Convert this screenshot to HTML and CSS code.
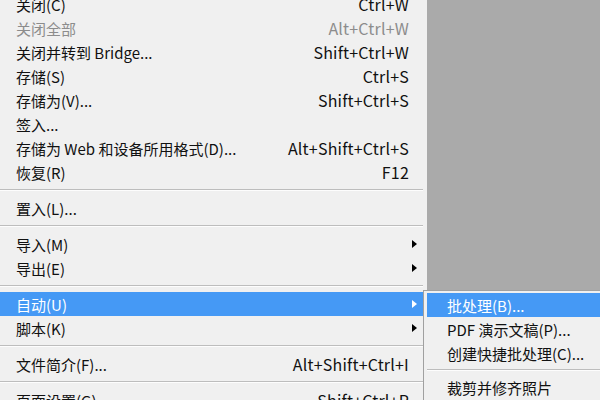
FILE: index.html
```html
<!DOCTYPE html>
<html lang="zh-CN">
<head>
    <meta charset="UTF-8">
    <title>文件菜单</title>
    <link rel="stylesheet" href="styles.css">
</head>
<body>
    <div class="menu">
        <div class="item"><span class="label">关闭(C)</span><span class="key">Ctrl+W</span><span class="sub"></span></div>
        <div class="item disabled"><span class="label">关闭全部</span><span class="key">Alt+Ctrl+W</span><span class="sub"></span></div>
        <div class="item"><span class="label">关闭并转到 Bridge...</span><span class="key">Shift+Ctrl+W</span><span class="sub"></span></div>
        <div class="item"><span class="label">存储(S)</span><span class="key">Ctrl+S</span><span class="sub"></span></div>
        <div class="item"><span class="label">存储为(V)...</span><span class="key">Shift+Ctrl+S</span><span class="sub"></span></div>
        <div class="item"><span class="label">签入...</span><span class="key"></span><span class="sub"></span></div>
        <div class="item"><span class="label">存储为 Web 和设备所用格式(D)...</span><span class="key">Alt+Shift+Ctrl+S</span><span class="sub"></span></div>
        <div class="item"><span class="label">恢复(R)</span><span class="key">F12</span><span class="sub"></span></div>
        <div class="separator"></div>
        <div class="item"><span class="label">置入(L)...</span><span class="key"></span><span class="sub"></span></div>
        <div class="separator"></div>
        <div class="item"><span class="label">导入(M)</span><span class="key"></span><span class="sub"><i class="arrow"></i></span></div>
        <div class="item"><span class="label">导出(E)</span><span class="key"></span><span class="sub"><i class="arrow"></i></span></div>
        <div class="separator"></div>
        <div class="item active"><span class="label">自动(U)</span><span class="key"></span><span class="sub"><i class="arrow"></i></span></div>
        <div class="item"><span class="label">脚本(K)</span><span class="key"></span><span class="sub"><i class="arrow"></i></span></div>
        <div class="separator"></div>
        <div class="item"><span class="label">文件简介(F)...</span><span class="key">Alt+Shift+Ctrl+I</span><span class="sub"></span></div>
        <div class="separator"></div>
        <div class="item"><span class="label">页面设置(G)...</span><span class="key">Shift+Ctrl+P</span><span class="sub"></span></div>

        <div class="submenu">
            <div class="item active"><span class="label">批处理(B)...</span></div>
            <div class="item"><span class="label">PDF 演示文稿(P)...</span></div>
            <div class="item"><span class="label">创建快捷批处理(C)...</span></div>
            <div class="separator"></div>
            <div class="item"><span class="label">裁剪并修齐照片</span></div>
        </div>
    </div>
    <div class="workspace"></div>
</body>
</html>
```

FILE: styles.css
```css
* {
    margin: 0;
    padding: 0;
    box-sizing: border-box;
}

body {
    font-family: 'Noto Sans CJK SC', 'Noto Sans', sans-serif;
    font-size: 15px;
    color: #111;
    width: 600px;
    height: 400px;
    overflow: hidden;
    display: flex;
    background: #aaaaaa;
}

.menu {
    position: relative;
    width: 427px;
    height: 420px;
    margin-top: -8px;
    padding-right: 4px;
    background: #f0f0f0;
    flex-shrink: 0;
}

.item {
    display: flex;
    align-items: center;
    height: 24px;
    padding-left: 16px;
    white-space: nowrap;
}

.item .label {
    flex: 1;
}

.item .key {
    font-size: 16px;
    letter-spacing: 0.2px;
    text-align: right;
}

.item .sub {
    width: 14px;
    height: 24px;
    display: flex;
    align-items: center;
    padding-left: 3px;
}

.arrow {
    width: 0;
    height: 0;
    border-top: 4.5px solid transparent;
    border-bottom: 4.5px solid transparent;
    border-left: 5px solid #000;
}

.item.disabled {
    color: #8c8c8c;
}

.item.active {
    background: #4599f5;
    color: #fff;
}

.item.active .arrow {
    border-left-color: #fff;
}

.separator {
    height: 12px;
    padding-top: 5px;
}

.separator::before {
    content: '';
    display: block;
    height: 1px;
    background: #bdbdbd;
    border-bottom: 1px solid #fdfdfd;
    box-sizing: content-box;
}

.workspace {
    flex: 1;
    background: #aaaaaa;
}

.submenu {
    position: absolute;
    left: 423px;
    top: 298px;
    width: 200px;
    padding: 2px 0 4px 3px;
    background: #f0f0f0;
    border-left: 1px solid #a0a0a0;
    border-top: 1px solid #a0a0a0;
}

.submenu .item {
    padding-left: 20px;
}

.submenu .separator {
    height: 10px;
    padding-top: 4px;
}
```
